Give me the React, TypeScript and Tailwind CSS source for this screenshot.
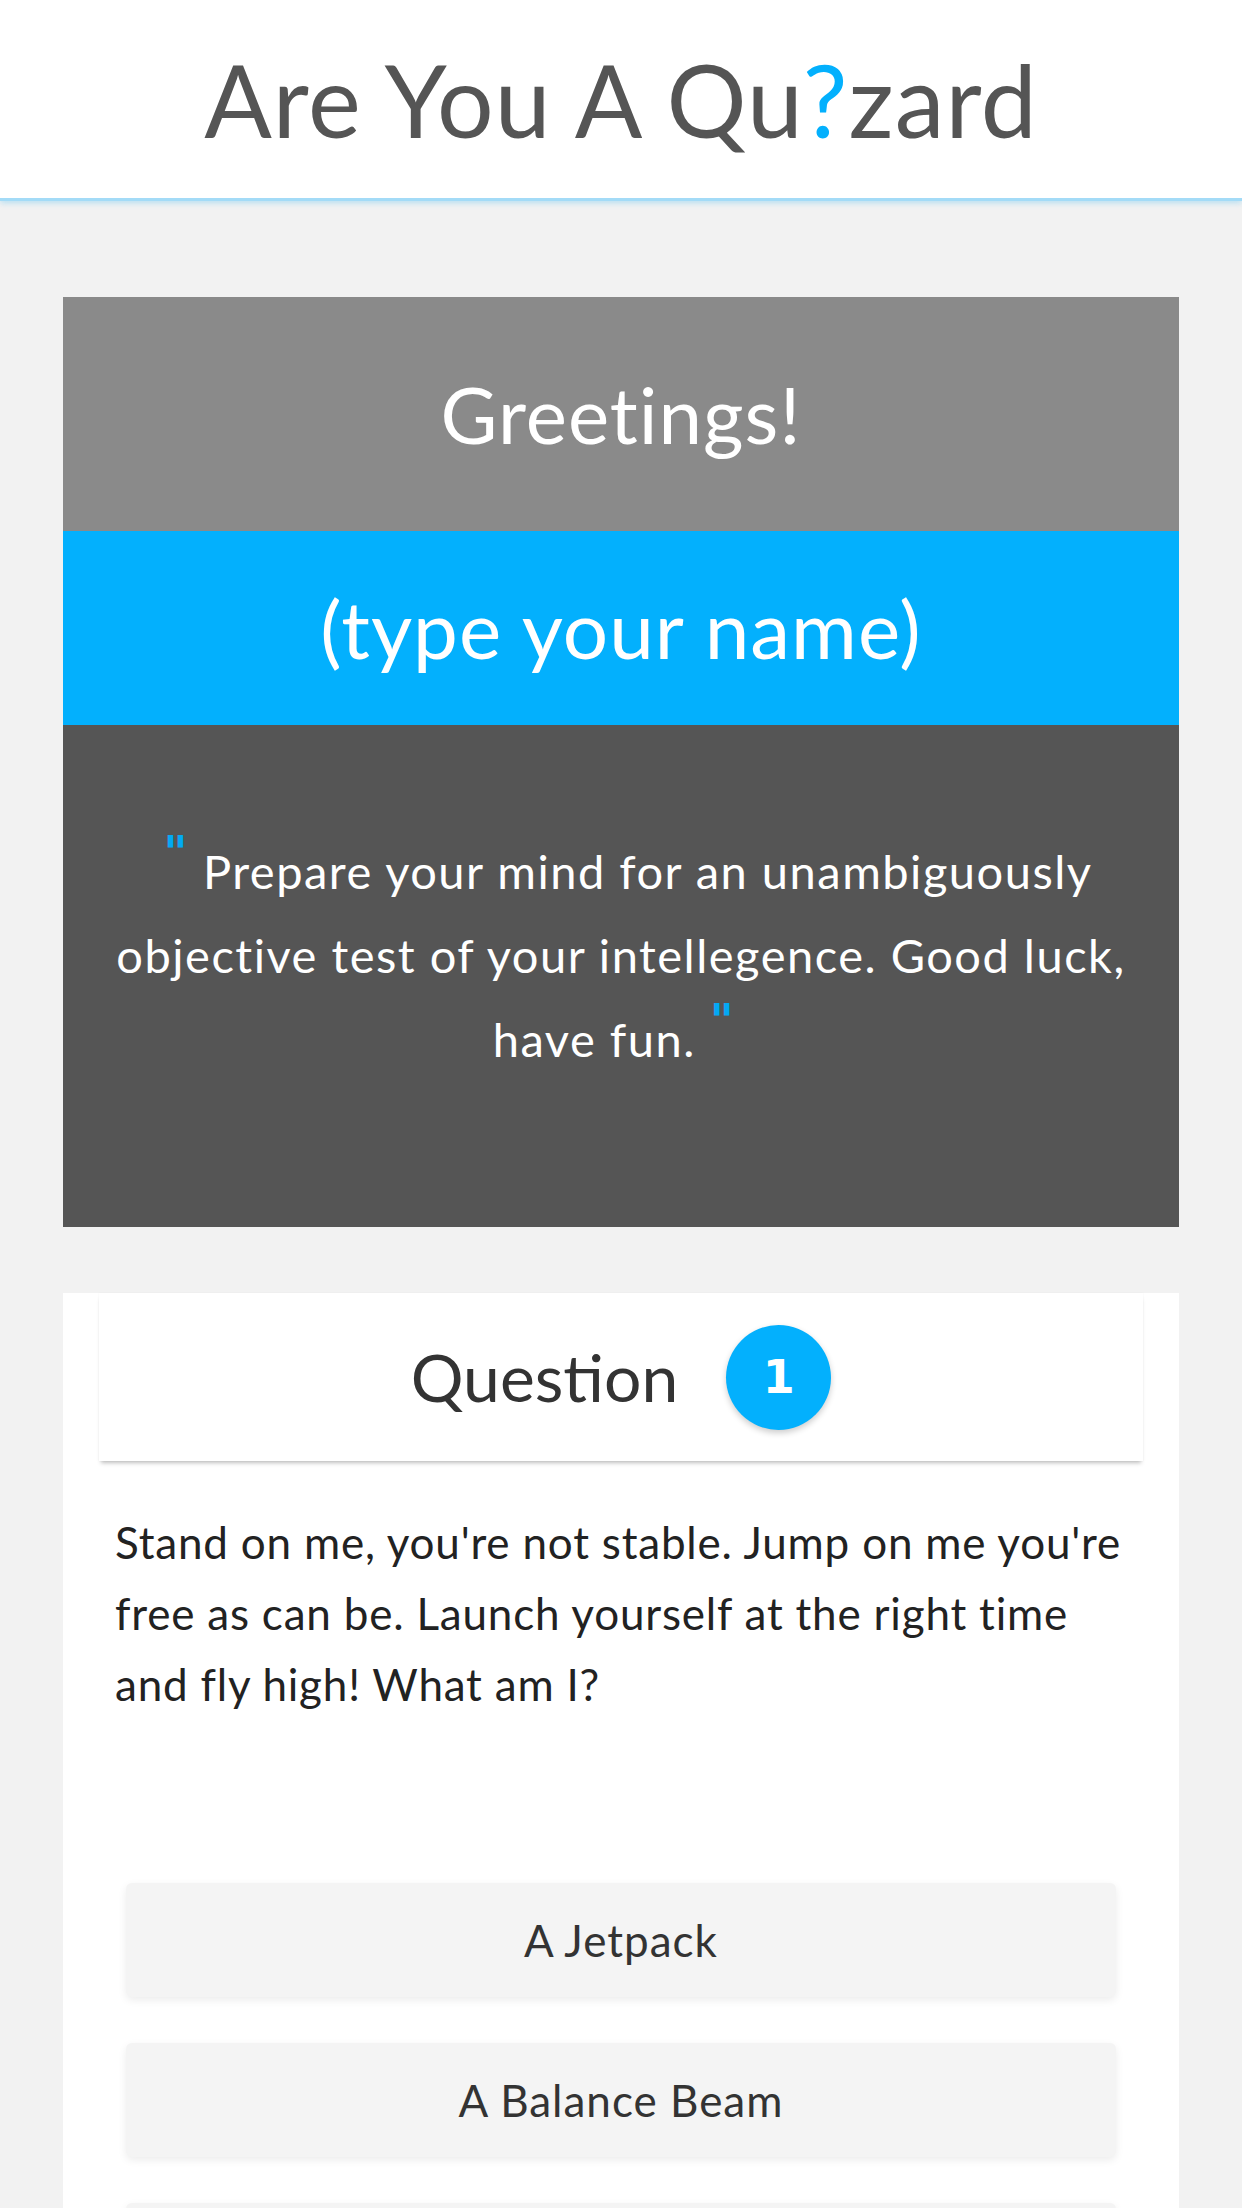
const OPTIONS = ['A Jetpack', 'A Balance Beam', 'A Trampoline', 'A Skateboard']

const Quote = () => (
    <span className="inline-block align-top mt-[4px] mx-[14px] text-[46px] font-bold text-[#03a9f4] font-['DejaVu_Sans',sans-serif] leading-[40px]">
        "
    </span>
)

export default function App() {
    return (
        <div className="min-h-[2208px] bg-[#f2f2f2] font-['Lato',sans-serif]">
            {/* Header */}
            <header className="h-[201px] bg-white border-b-[3px] border-[#a3dbf7] shadow-[0_2px_6px_rgba(3,169,244,0.25)] flex items-center justify-center">
                <h1 className="text-[100px] text-[#555] tracking-[1px] leading-none">
                    Are You A Qu<span className="text-[#03b0fd]">?</span>zard
                </h1>
            </header>

            <main className="px-[63px] pt-[96px] flex flex-col gap-[66px]">
                {/* Greeting card */}
                <section>
                    <div className="h-[234px] bg-[#8a8a8a] flex items-center justify-center">
                        <h2 className="text-[78px] text-white tracking-[1px] leading-none">Greetings!</h2>
                    </div>
                    <div className="h-[194px] bg-[#03b0fd] flex items-center justify-center">
                        <p className="text-[80px] text-white tracking-[1px] leading-none">(type your name)</p>
                    </div>
                    <div className="h-[502px] bg-[#555] px-[40px] pt-[104px]">
                        <p className="text-center text-white text-[47px] tracking-[1.5px] leading-[84px]">
                            <Quote />
                            Prepare your mind for an unambiguously objective test of your intellegence. Good luck, have fun.
                            <Quote />
                        </p>
                    </div>
                </section>

                {/* Question card */}
                <section className="bg-white pb-[60px]">
                    <div className="mx-[36px] h-[168px] bg-white shadow-[0_4px_4px_-2px_rgba(0,0,0,0.25),0_0_2px_rgba(0,0,0,0.04)] flex items-center justify-center gap-[48px]">
                        <h3 className="text-[66px] text-[#333] leading-none">Question</h3>
                        <div className="w-[105px] h-[105px] rounded-full bg-[#03b0fd] shadow-[0_3px_6px_rgba(0,0,0,0.2)] flex items-center justify-center">
                            <span className="text-white text-[46px] font-bold font-['DejaVu_Sans',sans-serif]">1</span>
                        </div>
                    </div>

                    <p className="pl-[52px] pr-[40px] pt-[46px] text-[44px] tracking-[0.8px] leading-[71px] text-[#222]">
                        Stand on me, you're not stable. Jump on me you're free as can be. Launch yourself at the right time and fly high! What am I?
                    </p>

                    <div className="mt-[163px] px-[63px] flex flex-col gap-[46px]">
                        {OPTIONS.map((option) => (
                            <button
                                key={option}
                                type="button"
                                className="h-[114px] rounded-[6px] bg-[#f4f4f4] shadow-[0_3px_8px_rgba(0,0,0,0.08)] text-[44px] tracking-[1px] text-[#333]"
                            >
                                {option}
                            </button>
                        ))}
                    </div>
                </section>
            </main>
        </div>
    )
}
